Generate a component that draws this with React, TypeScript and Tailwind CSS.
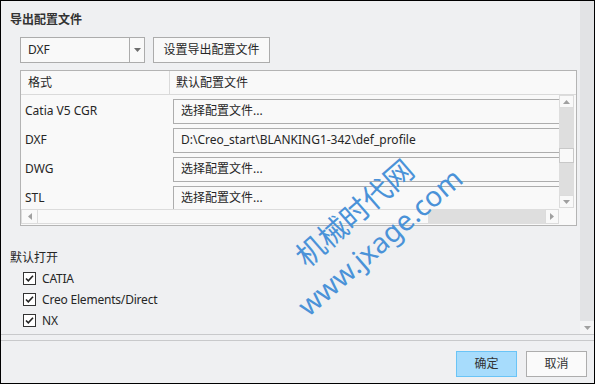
import clsx from "clsx";

const FONT = "font-['Noto_Sans','Noto_Sans_CJK_SC',sans-serif]";

const Tri = ({ dir, className }: { dir: "up" | "down" | "left" | "right"; className?: string }) => {
  const pts = {
    up: "0,4 7,4 3.5,0",
    down: "0,0 7,0 3.5,4",
    left: "4,0 4,7 0,3.5",
    right: "0,0 0,7 4,3.5",
  }[dir];
  const vertical = dir === "up" || dir === "down";
  return (
    <svg width={vertical ? 7 : 4} height={vertical ? 4 : 7} className={className}>
      <polygon points={pts} fill="currentColor" />
    </svg>
  );
};

const CheckBox = ({ label }: { label: string }) => (
  <div className="flex h-[21px] items-center gap-[6px] pl-[13px]">
    <div className="flex h-[13px] w-[13px] items-center justify-center border border-[#333] bg-white">
      <svg width="11" height="11" viewBox="0 0 11 11">
        <path d="M2 5.5 L4.3 7.8 L9 2.8" fill="none" stroke="#222" strokeWidth="1.6" />
      </svg>
    </div>
    <span className="text-[12px] tracking-[-0.2px] text-[#262626]">{label}</span>
  </div>
);

const rows = [
  { name: "Catia V5 CGR", value: "选择配置文件..." },
  { name: "DXF", value: "D:\\Creo_start\\BLANKING1-342\\def_profile" },
  { name: "DWG", value: "选择配置文件..." },
  { name: "STL", value: "选择配置文件..." },
];

export default function App() {
  return (
    <div
      className={clsx(
        "relative flex h-[384px] w-[595px] flex-col overflow-hidden border border-black bg-[#eff0f2] text-[12px] leading-[16px] text-[#262626]",
        FONT,
      )}
    >
      {/* scroll area */}
      <div className="flex h-[333px]">
        <div className="flex flex-1 flex-col pl-[9px] pt-[11px]">
          <div className="font-bold text-[#333]">导出配置文件</div>

          <div className="mt-[9px] flex gap-[8px] pl-[10px]">
            <div className="flex h-[26px] w-[125px] items-center border border-[#acacac] bg-[#f9f9f9]">
              <span className="flex-1 pl-[7px]">DXF</span>
              <div className="flex h-full w-[15px] items-center justify-center border-l border-[#acacac]">
                <Tri dir="down" className="text-[#6d6d6d]" />
              </div>
            </div>
            <div className="flex h-[26px] w-[117px] items-center justify-center border border-[#acacac] bg-[#f9f9f9]">
              设置导出配置文件
            </div>
          </div>

          {/* table */}
          <div className="mt-[7px] ml-[10px] flex h-[156px] w-[557px] flex-col border border-[#b4b4b4] bg-[#f9f9f9]">
            <div className="flex h-[24px] border-b border-[#dadada]">
              <div className="flex w-[149px] shrink-0 items-center border-r border-[#dadada] pl-[7px]">格式</div>
              <div className="flex items-center pl-[6px]">默认配置文件</div>
            </div>
            <div className="flex flex-1">
              <div className="flex w-[538px] flex-col">
                <div className="h-[114px] overflow-hidden">
                  {rows.map((r) => (
                    <div key={r.name} className="flex h-[29px] items-center pt-[3px]">
                      <div className="w-[152px] shrink-0 pl-[4px]">{r.name}</div>
                      <div className="flex h-[25px] w-[420px] shrink-0 items-center border border-[#adadad] bg-[#f9f9f9] pl-[7px]">
                        {r.value}
                      </div>
                    </div>
                  ))}
                </div>
                <div className="flex h-[15px]">
                  <div className="flex w-[17px] items-center justify-center border border-[#dcdcdc] bg-[#f9f9f9]">
                    <Tri dir="left" className="text-[#a0a0a0]" />
                  </div>
                  <div className="w-[390px] border-y border-[#dcdcdc] bg-[#f9f9f9]" />
                  <div className="flex-1 bg-[#dedede]" />
                  <div className="flex w-[14px] items-center justify-center border border-[#dcdcdc] bg-[#f9f9f9]">
                    <Tri dir="right" className="text-[#a0a0a0]" />
                  </div>
                </div>
              </div>
              <div className="flex w-[15px] flex-col">
                <div className="flex h-[113px] flex-col bg-[#dedede]">
                  <div className="flex h-[13px] items-center justify-center border border-[#dcdcdc] bg-[#f9f9f9]">
                    <Tri dir="up" className="text-[#a0a0a0]" />
                  </div>
                  <div className="h-[40px]" />
                  <div className="h-[15px] border border-[#c8c8c8] bg-[#f9f9f9]" />
                  <div className="flex-1" />
                  <div className="flex h-[13px] items-center justify-center border border-[#dcdcdc] bg-[#f9f9f9]">
                    <Tri dir="down" className="text-[#a0a0a0]" />
                  </div>
                </div>
                <div className="flex-1 bg-[#f9f9f9]" />
              </div>
            </div>
          </div>

          <div className="mt-[24px]">默认打开</div>
          <div className="mt-[2px] flex flex-col">
            <CheckBox label="CATIA" />
            <CheckBox label="Creo Elements/Direct" />
            <CheckBox label="NX" />
          </div>
        </div>

        {/* outer scrollbar */}
        <div className="flex w-[14px] flex-col justify-end bg-[#e2e3e5]">
          <div className="flex h-[13px] items-center justify-center bg-[#f4f4f5]">
            <Tri dir="down" className="text-[#a0a0a0]" />
          </div>
        </div>
      </div>

      <div className="h-px bg-[#c8c9cb]" />
      <div className="h-[5px]" />
      <div className="h-px bg-[#c8c9cb]" />

      <div className="flex flex-1 items-start justify-end gap-[9px] pr-[7px] pt-[10px]">
        <div className="flex h-[26px] w-[61px] items-center justify-center border border-[#6ac4f6] bg-[#a7dcfc] text-[#333]">
          确定
        </div>
        <div className="flex h-[26px] w-[61px] items-center justify-center border border-[#adadad] bg-[#fafafa] text-[#333]">
          取消
        </div>
      </div>

      {/* watermark */}
      <div className="pointer-events-none absolute left-[366px] top-[226px] -translate-x-1/2 -translate-y-1/2 -rotate-[41deg] whitespace-nowrap text-center leading-[38px] text-[#4a92d8]">
        <div className="text-[29px]">机械时代网</div>
        <div className="text-[28px]">www.jxage.com</div>
      </div>
    </div>
  );
}
